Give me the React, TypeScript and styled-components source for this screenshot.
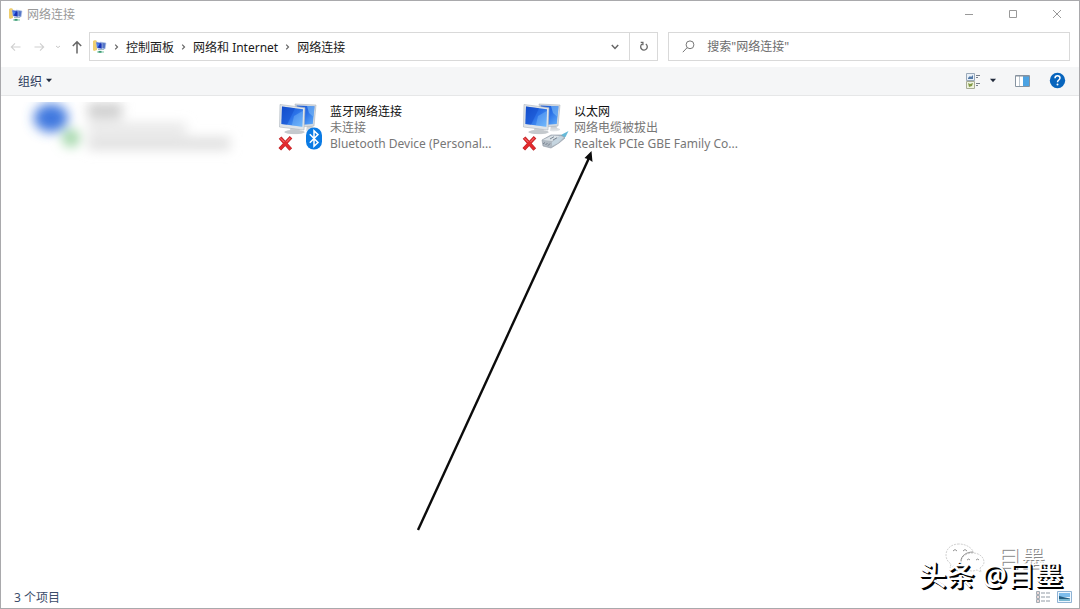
import React from "react";
import styled, { createGlobalStyle } from "styled-components";

const Global = createGlobalStyle`
  * { box-sizing: border-box; }
  body { margin: 0; background: #fff; }
  body, button, input { font-family: "Noto Sans", "Noto Sans CJK SC", sans-serif; font-size: 12px; }
  button { border: 0; padding: 0; background: none; color: inherit; text-align: left; }
  svg { display: block; flex: none; }
`;

const Window = styled.div`
  position: relative;
  display: flex;
  flex-direction: column;
  min-height: 100vh;
  border: 1px solid #a9a9ac;
  background: #fff;
`;

const TitleBar = styled.header`
  display: flex;
  align-items: center;
  height: 26px;
  padding-left: 7px;
`;

const Title = styled.h1`
  flex: 1;
  margin: 0 0 0 4px;
  font-size: 12px;
  font-weight: 400;
  color: #999;
`;

const WindowButton = styled.button`
  display: grid;
  place-items: center;
  width: 44px;
  height: 26px;
`;

const NavRow = styled.div`
  display: flex;
  align-items: center;
  height: 40px;
  padding: 0 9px 1px 8px;
`;

const History = styled.div`
  display: flex;
  align-items: center;
  gap: 9px;
  width: 80px;
`;

const HistoryButton = styled.button`
  display: flex;
  align-items: center;
  height: 28px;
`;

const AddressBar = styled.nav`
  display: flex;
  align-items: center;
  flex: 19 1 0;
  height: 29px;
  padding-left: 2px;
  border: 1px solid #d9d9d9;
`;

const Crumbs = styled.div`
  display: flex;
  align-items: center;
  flex: 1;
  gap: 7px;
  margin-left: 7px;
  white-space: nowrap;
`;

const Crumb = styled.a`
  color: #1a1a1a;
  text-decoration: none;
`;

const BarButton = styled.button<{ $divided?: boolean }>`
  display: grid;
  place-items: center;
  width: 28px;
  height: 27px;
  border-left: ${(p) => (p.$divided ? "1px solid #d9d9d9" : "0")};
`;

const SearchBox = styled.label`
  display: flex;
  align-items: center;
  flex: 13 1 0;
  gap: 12px;
  height: 29px;
  padding-left: 13px;
  border: 1px solid #d9d9d9;
`;

const SearchInput = styled.input`
  flex: 1;
  min-width: 0;
  padding: 0;
  border: 0;
  outline: 0;
  background: none;
  &::placeholder { color: #6d6d6d; opacity: 1; }
`;

const AddressGroup = styled.div`
  display: flex;
  flex: 1;
  gap: 10px;
`;

const Toolbar = styled.div`
  display: flex;
  align-items: center;
  justify-content: space-between;
  height: 29px;
  padding: 0 13px 1px 17px;
  background: #f5f6f7;
  border-bottom: 1px solid #e6e7e8;
`;

const OrganizeButton = styled.button`
  display: flex;
  align-items: center;
  gap: 3px;
  color: #2b3a5c;
`;

const ToolGroup = styled.div`
  display: flex;
  align-items: center;
  gap: 18px;
`;

const ToolButton = styled.button`
  display: flex;
  align-items: center;
  gap: 8px;
`;

const Connections = styled.main`
  display: grid;
  grid-template-columns: repeat(auto-fill, 244px);
  align-content: start;
  flex: 1;
  padding: 6px 0 0 33px;
`;

const Connection = styled.button`
  display: flex;
  gap: 4px;
  width: 236px;
`;

const Lines = styled.span`
  display: flex;
  flex-direction: column;
  min-width: 0;
  padding-top: 2px;
`;

const Line = styled.span<{ $name?: boolean }>`
  line-height: 16px;
  white-space: nowrap;
  color: ${(p) => (p.$name ? "#111" : "#777")};
`;

const HiddenDrawing = styled.svg`
  overflow: visible;
`;

const StatusBar = styled.footer`
  display: flex;
  align-items: center;
  justify-content: space-between;
  height: 23px;
  padding: 0 7px 0 13px;
  color: #3b4d6b;
`;

const ViewButtons = styled.div`
  display: flex;
  align-items: center;
  gap: 7px;
`;

const Pointer = styled.svg`
  position: absolute;
  left: 409px;
  top: 144px;
  pointer-events: none;
`;

const Watermark = styled.div`
  position: absolute;
  right: 16px;
  bottom: 15px;
  font-size: 28px;
  font-weight: 500;
  line-height: 36px;
  white-space: nowrap;
  color: #fff;
  text-shadow: 1px 1px 0 #000, 2px 2px 0 #000;
  pointer-events: none;
`;

const AccountMark = styled.div`
  position: absolute;
  right: 34px;
  bottom: 32px;
  display: flex;
  align-items: center;
  gap: 10px;
  font-size: 24px;
  line-height: 36px;
  color: #fff;
  text-shadow: 1px 1px 0 #888;
  pointer-events: none;
`;

const NetworkIcon = () => (
  <svg width="15" height="15" viewBox="0 0 15 15">
    <path d="M1 2 3 1l2 1v9l-3 1-1-1Z" fill="#efcf70" />
    <path d="m8 3 6 1-1 6-5-1Z" fill="#5676c7" stroke="#b4c8e7" strokeWidth=".6" />
    <path d="m4 3 6 1v6L5 9Z" fill="#1733b7" stroke="#c1d4eb" strokeWidth=".6" />
    <path d="m5 4 3 .5L6 8H5Z" fill="#4f83ed" />
    <path d="M6 10.5h6" stroke="#a6bac5" />
    <path d="M5 13h7" stroke="#8fd0b3" strokeWidth="1.2" />
    <path d="M6.5 12.8h3" stroke="#3c9773" strokeWidth="1.8" />
  </svg>
);

const Chevron = () => (
  <svg width="5" height="8" viewBox="0 0 5 8" fill="none" stroke="#666" strokeWidth="1.2">
    <path d="M1.2 1.7 3.5 4 1.2 6.3" />
  </svg>
);

const ArrowIcon = ({ dir, color }: { dir: "left" | "right" | "up"; color: string }) => {
  const d = {
    left: "M11.5 7H2.5M6 3.3 2.3 7 6 10.7",
    right: "M2.5 7h9M8 3.3 11.7 7 8 10.7",
    up: "M7 13.5V2M2.8 6 7 1.8 11.2 6",
  }[dir];
  return (
    <svg width="14" height="14" viewBox="0 0 14 14" fill="none" stroke={color} strokeWidth={dir === "up" ? 1.5 : 1.1}>
      <path d={d} />
    </svg>
  );
};

const Caret = () => (
  <svg width="8" height="5" viewBox="0 0 8 5"><path d="M1 .8h6L4 4.2Z" fill="#222b3c" /></svg>
);

const Monitors = () => (
  <>
    <defs>
      <linearGradient id="screen" x1="0" y1="0" x2="1" y2="1">
        <stop offset="0" stopColor="#1553d2" />
        <stop offset=".5" stopColor="#2b72e8" />
        <stop offset="1" stopColor="#65b1fa" />
      </linearGradient>
      <linearGradient id="stand" x1="0" y1="0" x2="0" y2="1">
        <stop offset="0" stopColor="#b5bbc1" />
        <stop offset="1" stopColor="#e8eaec" />
      </linearGradient>
    </defs>
    <path d="m29 23 5-1 1 4 3 1c1 2-6 3-10 2Z" fill="url(#stand)" />
    <path d="m17 2 21 1-2 21-15 1Z" fill="#d5dbe1" stroke="#aeb6be" strokeWidth=".6" />
    <path d="m18.5 3.5 18 .8L34.8 22 22 23Z" fill="url(#screen)" />
    <path d="m29 4 7.5.3L35.5 15 31 11Z" fill="#76b6f5" opacity=".65" />
    <path d="m13 24 8 1 1 4 5 1c-1 3-18 3-21 0l6-2Z" fill="url(#stand)" />
    <ellipse cx="16.5" cy="30" rx="10" ry="2" fill="#c4c9cd" />
    <path d="m2 2.5 25 3.2L26 28 1.5 25Z" fill="#dfe4e9" stroke="#adb5be" strokeWidth=".6" />
    <path d="m4 4.5 21 2.7-.7 17.6L3.4 22Z" fill="url(#screen)" />
    <path d="M4 4.5 17 6.2 9 22.8 3.4 22Z" fill="#0e43c2" opacity=".4" />
    <path d="m16 14 8.7-5-.4 15.8-10.5-1.4Z" fill="#8bcaff" opacity=".35" />
  </>
);

const RedCross = () => (
  <g strokeLinecap="square">
    <path d="m3.3 37 8.3 9.2M11.8 36.6 3 46" stroke="#b8272b" strokeWidth="3.6" />
    <path d="m3.3 37 8.3 9.2M11.8 36.6 3 46" stroke="#e3292c" strokeWidth="2.6" />
    <path d="m3 36.7 3 3M11.7 36.5 9 39.5" stroke="#f4797a" strokeWidth="1" />
  </g>
);

const BluetoothAdapterIcon = () => (
  <svg width="48" height="50" viewBox="0 0 48 50">
    <Monitors />
    <RedCross />
    <rect x="28" y="25.5" width="16" height="22" rx="7.8" fill="#0b7be4" />
    <path d="m31.8 32.2 8.2 8.3-4 3.8V28.8l4 3.8-8.2 8.2" fill="none" stroke="#fff" strokeWidth="1.5" />
  </svg>
);

const EthernetAdapterIcon = () => (
  <svg width="48" height="50" viewBox="0 0 48 50">
    <Monitors />
    <RedCross />
    <path d="m37 34 9.5-5-3 6-5 2Z" fill="#66b9d8" />
    <path d="m20 38 9-5 10 0 4 3-6 5-8 5-8-2Z" fill="#b1bac3" stroke="#8b96a1" strokeWidth=".6" />
    <path d="m21 38 9-4.5 8 .5-8 5Z" fill="#dce3e8" />
    <path d="m30 40 8-6 4 1-6 6-6 3Z" fill="#c5d5e0" />
    <path d="m21 42 2-1.5M23.5 43l2-2M26 43.7l2-2.2M28 37l4-2.3M31 38l4-2.3" stroke="#6e7c8a" strokeWidth=".9" />
  </svg>
);

const HiddenConnection = () => (
  <HiddenDrawing width="236" height="50" viewBox="0 0 236 50" aria-hidden="true">
    <defs>
      <filter id="soft" x="-40" y="0" width="300" height="64" filterUnits="userSpaceOnUse">
        <feGaussianBlur stdDeviation="6" />
      </filter>
    </defs>
    <g filter="url(#soft)">
      <ellipse cx="17" cy="16" rx="17" ry="14" fill="#3f78df" />
      <circle cx="37" cy="36" r="9" fill="#9fd6a6" />
      <rect x="54" y="1" width="34" height="16" fill="#cfcfcf" />
      <rect x="54" y="21" width="98" height="11" fill="#e6e6e6" />
      <rect x="54" y="35" width="142" height="13" fill="#e0e0e0" />
    </g>
  </HiddenDrawing>
);

export default function App() {
  return (
    <>
      <Global />
      <Window>
        <TitleBar>
          <NetworkIcon />
          <Title>网络连接</Title>
          <WindowButton aria-label="最小化">
            <svg width="10" height="10" viewBox="0 0 10 10"><path d="M1 5.5h8" stroke="#999" /></svg>
          </WindowButton>
          <WindowButton aria-label="最大化">
            <svg width="10" height="10" viewBox="0 0 10 10"><path d="M1.5 1.5h7v7h-7Z" fill="none" stroke="#999" /></svg>
          </WindowButton>
          <WindowButton aria-label="关闭">
            <svg width="10" height="10" viewBox="0 0 10 10"><path d="m1 1 8 8M9 1 1 9" stroke="#999" /></svg>
          </WindowButton>
        </TitleBar>

        <NavRow>
          <History>
            <HistoryButton aria-label="后退"><ArrowIcon dir="left" color="#d0d0d0" /></HistoryButton>
            <HistoryButton aria-label="前进"><ArrowIcon dir="right" color="#d0d0d0" /></HistoryButton>
            <HistoryButton aria-label="最近浏览的位置">
              <svg width="6" height="4" viewBox="0 0 6 4"><path d="m1 1 2 1.6L5 1" fill="none" stroke="#c8c8c8" /></svg>
            </HistoryButton>
            <HistoryButton aria-label="上移"><ArrowIcon dir="up" color="#666" /></HistoryButton>
          </History>
          <AddressGroup>
            <AddressBar aria-label="地址">
              <NetworkIcon />
              <Crumbs>
                <Chevron />
                <Crumb href="#panel">控制面板</Crumb>
                <Chevron />
                <Crumb href="#network">网络和 Internet</Crumb>
                <Chevron />
                <Crumb href="#connections">网络连接</Crumb>
              </Crumbs>
              <BarButton aria-label="以前的位置">
                <svg width="10" height="8" viewBox="0 0 10 8"><path d="m1.8 2 3.2 3.4L8.2 2" fill="none" stroke="#666" strokeWidth="1.5" /></svg>
              </BarButton>
              <BarButton $divided aria-label="刷新">
                <svg width="10" height="11" viewBox="0 0 10 11" fill="none" stroke="#666" strokeWidth="1.3">
                  <path d="M6.8 3A3.3 3.3 0 1 1 3 3.1M1.7 1.3h2.2v3" />
                </svg>
              </BarButton>
            </AddressBar>
            <SearchBox>
              <svg width="13" height="13" viewBox="0 0 13 13" fill="none" stroke="#777">
                <circle cx="8" cy="4.8" r="3.9" />
                <path d="M5.2 7.6.8 12.2" />
              </svg>
              <SearchInput type="search" aria-label="搜索" placeholder={'搜索"网络连接"'} />
            </SearchBox>
          </AddressGroup>
        </NavRow>

        <Toolbar>
          <OrganizeButton>组织 <Caret /></OrganizeButton>
          <ToolGroup>
            <ToolButton aria-label="更改视图">
              <svg width="15" height="16" viewBox="0 0 15 16">
                <path d="M.5.5h8v7h-8Z" fill="#e8f0f8" stroke="#9aa9b9" />
                <path d="m2 5 2-2 1 1 2-2v4H2Z" fill="#5279a7" />
                <path d="M.5 8.5h8v7h-8Z" fill="#eef3df" stroke="#a8ac96" />
                <path d="m2 10 2 1 3-1-1 3-3 1Z" fill="#829a45" />
                <path d="M10 2.5h4M10 4.5h2M10 10.5h4M10 12.5h2" stroke="#777f8b" />
              </svg>
              <Caret />
            </ToolButton>
            <ToolButton aria-label="显示预览窗格">
              <svg width="16" height="12" viewBox="0 0 16 12">
                <path d="M.5.5h14v11H.5Z" fill="#fff" stroke="#8794a1" />
                <path d="M4.5 1v10" stroke="#bbc5ce" />
                <path d="M8 1h6v10H8Z" fill="#4ca3e3" />
                <path d="M1 1h13" stroke="#87919c" />
              </svg>
            </ToolButton>
            <ToolButton aria-label="帮助">
              <svg width="17" height="17" viewBox="0 0 17 17">
                <circle cx="8.5" cy="8.5" r="7.7" fill="#0865bd" />
                <path d="M6 6.2c.1-3.4 5-3.1 5-.2 0 2-2.5 2-2.5 4.2" fill="none" stroke="#fff" strokeWidth="1.5" />
                <circle cx="8.5" cy="12.6" r="1" fill="#fff" />
              </svg>
            </ToolButton>
          </ToolGroup>
        </Toolbar>

        <Connections>
          <HiddenConnection />
          <Connection>
            <BluetoothAdapterIcon />
            <Lines>
              <Line $name>蓝牙网络连接</Line>
              <Line>未连接</Line>
              <Line>Bluetooth Device (Personal...</Line>
            </Lines>
          </Connection>
          <Connection>
            <EthernetAdapterIcon />
            <Lines>
              <Line $name>以太网</Line>
              <Line>网络电缆被拔出</Line>
              <Line>Realtek PCIe GBE Family Co...</Line>
            </Lines>
          </Connection>
        </Connections>

        <StatusBar>
          <span>3 个项目</span>
          <ViewButtons>
            <ToolButton aria-label="详细信息">
              <svg width="14" height="12" viewBox="0 0 14 12">
                <path d="M.5.5h3v3h-3ZM.5 4.5h3v3h-3ZM.5 8.5h3v3h-3Z" fill="#fff" stroke="#a4acb4" />
                <path d="M1.5 2h1M1.5 6h1M1.5 10h1" stroke="#a66" />
                <path d="M5 2h4M10 2h4M5 6h4M10 6h4M5 10h4M10 10h4" stroke="#929ba5" />
              </svg>
            </ToolButton>
            <ToolButton aria-label="大图标">
              <svg width="15" height="12" viewBox="0 0 15 12">
                <path d="M.5.5h14v11H.5Z" fill="#eef7ff" stroke="#8fb3d4" />
                <path d="M2 2h11v4H2Z" fill="#7dbdec" />
                <path d="m2 5 4 1 7 1.5V8H2Z" fill="#245f83" />
                <path d="M2 8h11v2H2Z" fill="#78b7d1" />
              </svg>
            </ToolButton>
          </ViewButtons>
        </StatusBar>

        <Pointer width="190" height="390" viewBox="0 0 190 390">
          <path d="M8 385 179 13" stroke="#0b0b0b" strokeWidth="2.4" />
          <path d="m181.5 6 1 11-3.5-2.5-4.5-1.5Z" fill="#0b0b0b" />
        </Pointer>
        <AccountMark>
          <svg width="42" height="32" viewBox="0 0 42 32" fill="#fff" stroke="#c4c4c4" strokeWidth=".8">
            <path d="M14 2C6 2 1 7 1 13c0 4 2 7 5 9l-1 4 5-3c2 1 4 1 7 1 7-1 12-5 12-11S22 2 14 2Z" strokeDasharray="2 1" />
            <path d="M28 11c-7 0-12 4-12 9s5 9 12 9l4-1 4 2-1-4c3-2 4-4 4-6 0-5-5-9-11-9Z" strokeDasharray="2 1" />
            <path d="M16 19c0-5 5-9 12-9M8 9q2-3 4 0M18 9q2-3 4 0M22 18q2-2 3 0M31 18q2-2 3 0" fill="none" stroke="#777" />
          </svg>
          <span>目墨</span>
        </AccountMark>
        <Watermark>头条 @目墨</Watermark>
      </Window>
    </>
  );
}
